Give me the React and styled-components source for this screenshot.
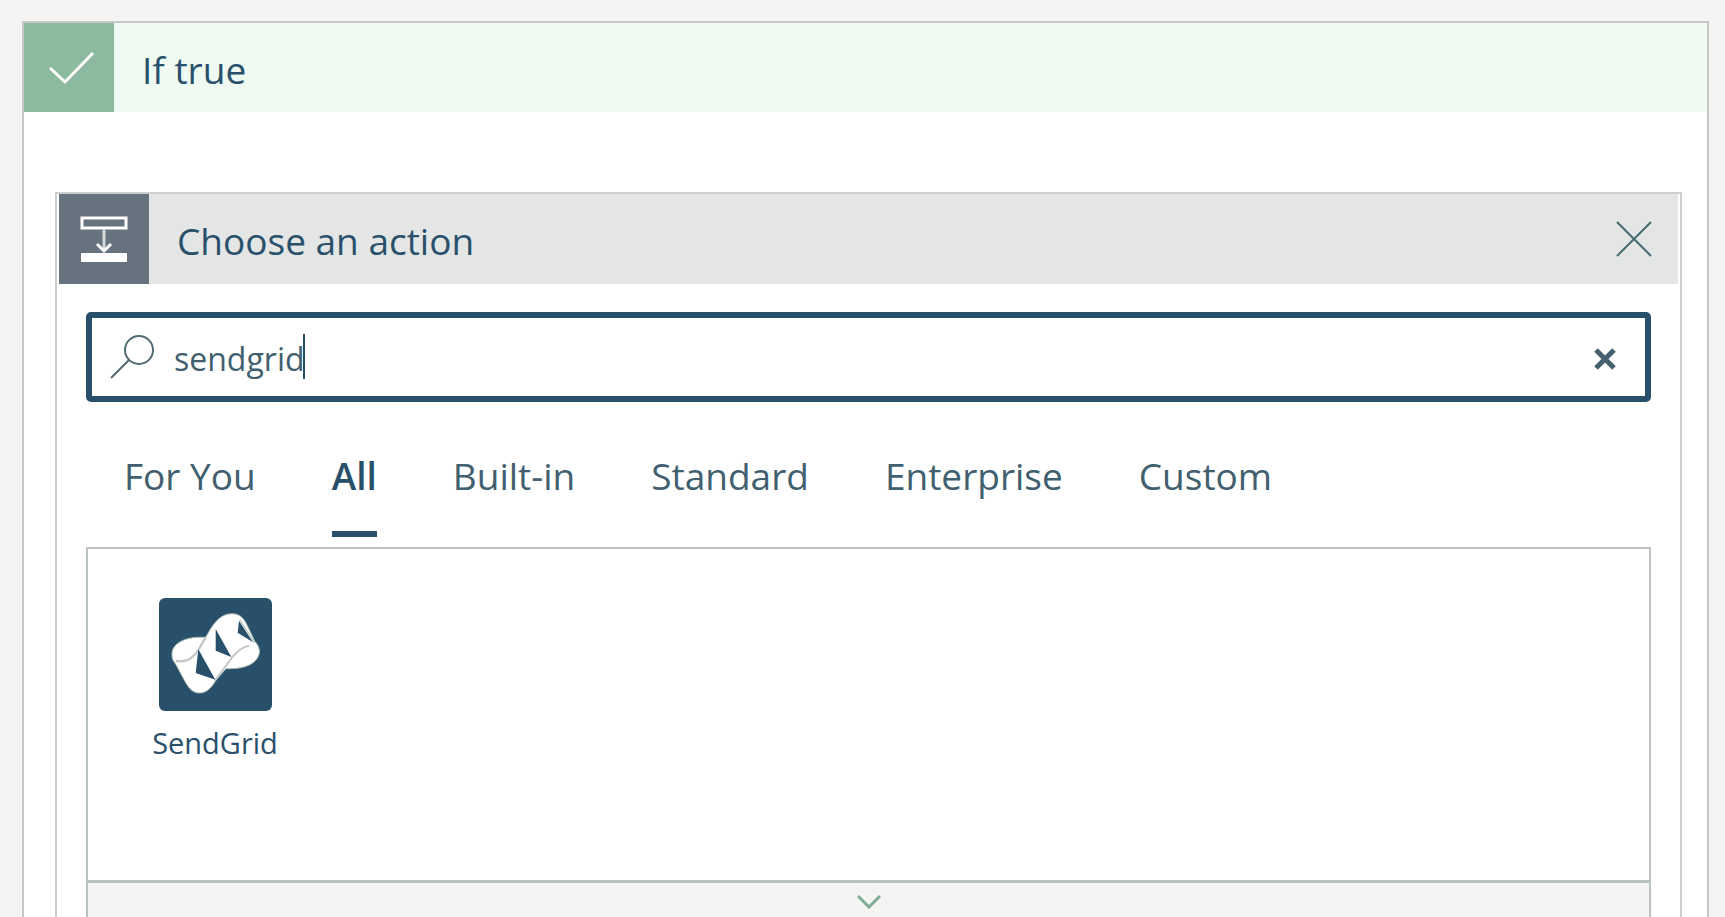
import React, { useState } from "react";
import styled, { createGlobalStyle } from "styled-components";

const ink = "#29506b";
const softInk = "#41606f";

const GlobalStyle = createGlobalStyle`
  *, *::before, *::after { box-sizing: border-box; }
  body {
    margin: 0;
    background: #f4f4f2;
    color: ${ink};
    font-family: "Open Sans", "Noto Sans", sans-serif;
  }
  button, input { font: inherit; color: inherit; }
`;

const Page = styled.main`
  display: flex;
  flex-direction: column;
  min-height: 100vh;
  padding: 21px 16px 0 22px;
`;

const Branch = styled.section`
  flex: 1;
  display: flex;
  flex-direction: column;
  background: #fff;
  border: 2px solid #c6c8c7;
  border-bottom: 0;
`;

const Header = styled.header`
  display: flex;
  align-items: center;
  height: ${(p) => (p.$inset ? 90 : 89)}px;
  margin: 0 ${(p) => (p.$inset ? 2 : 0)}px;
  padding-right: 20px;
  background: ${(p) => p.$background};
`;

const IconTile = styled.div`
  width: 90px;
  height: 100%;
  background: ${(p) => p.$background};

  svg { display: block; }
`;

const Title = styled.h2`
  flex: 1;
  margin: 0;
  padding: 4px 0 0 28px;
  font-size: 37px;
  line-height: 48px;
  font-weight: 400;
`;

const IconButton = styled.button`
  display: grid;
  place-items: center;
  width: 48px;
  height: 48px;
  padding: 0;
  border: 0;
  background: none;
  cursor: pointer;
`;

const ActionCard = styled.section`
  flex: 1;
  display: flex;
  flex-direction: column;
  margin: 80px 25px 0 31px;
  border: 2px solid #cdcfce;
  border-bottom: 0;
`;

const Body = styled.div`
  flex: 1;
  display: flex;
  flex-direction: column;
  padding: 28px 29px 0;
`;

const SearchBox = styled.div`
  display: flex;
  align-items: center;
  height: 90px;
  padding: 3px 16px 0 18px;
  border: 6px solid ${ink};
  border-radius: 5px;
`;

const SearchLabel = styled.label`
  display: flex;
  margin-right: 18px;
`;

const SearchInput = styled.input`
  field-sizing: content;
  min-width: 2px;
  padding: 0;
  border: 0;
  outline: 0;
  background: none;
  color: ${softInk};
  caret-color: transparent;
  font-size: 32px;
  line-height: 48px;
`;

const Caret = styled.span`
  width: 2px;
  height: 45px;
  margin: 0 auto 4px -2px;
  background: ${ink};
`;

const Tabs = styled.div`
  display: flex;
  gap: 76px;
  padding: 48px 36px 0 38px;
`;

const Tab = styled.button`
  height: 87px;
  padding: 0 0 30px;
  border: 0;
  border-bottom: 6px solid ${(p) => (p.$active ? ink : "transparent")};
  background: none;
  color: ${(p) => (p.$active ? ink : softInk)};
  font-size: 37px;
  line-height: 48px;
  font-weight: ${(p) => (p.$active ? 600 : 400)};
  white-space: nowrap;
  cursor: pointer;
`;

const Results = styled.div`
  flex: 1;
  display: flex;
  flex-direction: column;
  margin-top: 10px;
  border: 2px solid #bac3be;
  border-bottom: 0;
`;

const ConnectorList = styled.div`
  display: flex;
  min-height: 331px;
  padding: 49px 62px;
`;

const Connector = styled.button`
  display: flex;
  flex-direction: column;
  align-items: center;
  gap: 12px;
  width: 130px;
  padding: 0;
  border: 0;
  background: none;
  font-size: 29px;
  line-height: 40px;
  cursor: pointer;
`;

const Expander = styled.button`
  flex: 1;
  min-height: 36px;
  display: flex;
  justify-content: center;
  align-items: flex-start;
  padding: 12px 0 0;
  border: 0;
  border-top: 3px solid #bac3be;
  background: #f4f4f3;
  cursor: pointer;
`;

const CheckIcon = () => (
  <svg width="90" height="90" fill="none" stroke="#fff" strokeWidth="3" aria-hidden="true">
    <path d="M26 45 41 59 69 30" />
  </svg>
);

const ActionIcon = () => (
  <svg width="90" height="90" fill="none" stroke="#fff" aria-hidden="true">
    <rect x="23" y="24" width="44" height="10" strokeWidth="3" />
    <path d="M45 35V57" stroke="#d5dad8" strokeWidth="3" />
    <path d="M38 50 45 57 52 50" strokeWidth="3" />
    <rect x="22" y="59" width="46" height="9" fill="#fff" stroke="none" />
  </svg>
);

const CloseIcon = () => (
  <svg width="36" height="36" fill="none" stroke="#456b70" strokeWidth="2" aria-hidden="true">
    <path d="M1 1 35 35M35 1 1 35" />
  </svg>
);

const ClearIcon = () => (
  <svg width="24" height="24" fill="none" stroke="#45606f" strokeWidth="5" aria-hidden="true">
    <path d="M3 3 21 21M21 3 3 21" />
  </svg>
);

const SearchIcon = () => (
  <svg width="46" height="48" fill="none" stroke="#506b72" strokeWidth="2" aria-hidden="true">
    <circle cx="29" cy="15" r="14" />
    <path d="M19 25 1 43" />
  </svg>
);

const ChevronIcon = () => (
  <svg width="24" height="14" fill="none" stroke="#80ac98" strokeWidth="3" aria-hidden="true">
    <path d="M1 1 12 12 23 1" />
  </svg>
);

const SendGridLogo = () => (
  <svg width="113" height="113" viewBox="57 54 339 339" aria-hidden="true">
    <rect x="57" y="54" width="339" height="339" rx="18" fill={ink} />
    <path
      d="M96 222C96 190 136 168 197 172 220 130 240 101 276 101 300 101 310 114 320 133L345 185C355 195 360 208 358 220 350 254 310 268 258 266L228 300C214 326 197 340 176 339 154 338 143 318 132 299L108 254C99 242 95 236 96 222Z"
      fill="#fff"
      stroke="#a7b9af"
      strokeWidth="3"
    />
    <path d="M108 243C139 248 160 234 174 212L197 172" fill="none" stroke="#c4c8c6" strokeWidth="7" />
    <path d="M226 300 275 234C292 212 306 201 327 197" fill="none" stroke="#c4c8c6" strokeWidth="6" />
    <path d="M175 208 226 299 167 279Z" fill={ink} />
    <path d="M227 147 274 231 227 212Z" fill={ink} />
    <path d="M297 122 339 187 293 158Z" fill={ink} />
    <path d="M300 120 343 187" stroke="#b9c7bf" strokeWidth="4" />
  </svg>
);

const categories = ["For You", "All", "Built-in", "Standard", "Enterprise", "Custom"];

export default function App() {
  const [query, setQuery] = useState("sendgrid");
  const [active, setActive] = useState("All");

  return (
    <>
      <GlobalStyle />
      <Page>
        <Branch>
          <Header $background="#effaf3">
            <IconTile $background="#8cba9f"><CheckIcon /></IconTile>
            <Title>If true</Title>
          </Header>
          <ActionCard>
            <Header $inset $background="#e4e6e5">
              <IconTile $background="#66727e"><ActionIcon /></IconTile>
              <Title>Choose an action</Title>
              <IconButton aria-label="Close"><CloseIcon /></IconButton>
            </Header>
            <Body>
              <SearchBox>
                <SearchLabel htmlFor="action-search" aria-label="Search actions"><SearchIcon /></SearchLabel>
                <SearchInput
                  id="action-search"
                  type="text"
                  autoComplete="off"
                  spellCheck="false"
                  value={query}
                  onChange={(e) => setQuery(e.target.value)}
                />
                <Caret />
                <IconButton aria-label="Clear search" onClick={() => setQuery("")}><ClearIcon /></IconButton>
              </SearchBox>
              <Tabs role="tablist">
                {categories.map((name) => (
                  <Tab
                    key={name}
                    role="tab"
                    aria-selected={active === name}
                    $active={active === name}
                    onClick={() => setActive(name)}
                  >
                    {name}
                  </Tab>
                ))}
              </Tabs>
              <Results>
                <ConnectorList>
                  <Connector>
                    <SendGridLogo />
                    SendGrid
                  </Connector>
                </ConnectorList>
                <Expander aria-label="Show more"><ChevronIcon /></Expander>
              </Results>
            </Body>
          </ActionCard>
        </Branch>
      </Page>
    </>
  );
}
